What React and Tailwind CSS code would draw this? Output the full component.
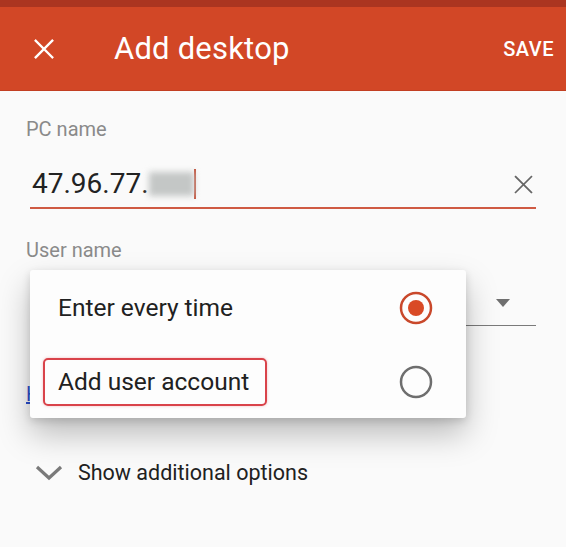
import React from 'react';

function CloseIcon({ size = 22, stroke = 'currentColor', width = 2.5 }) {
  return (
    <svg width={size} height={size} viewBox="0 0 24 24" fill="none">
      <path d="M3 3L21 21M21 3L3 21" stroke={stroke} strokeWidth={width} strokeLinecap="square" />
    </svg>
  );
}

function Radio({ checked }) {
  return (
    <svg width="34" height="34" viewBox="0 0 34 34">
      {checked ? (
        <>
          <circle cx="17" cy="17" r="15" fill="none" stroke="#c9482b" strokeWidth="2.5" />
          <circle cx="17" cy="17" r="8" fill="#d94a26" />
        </>
      ) : (
        <circle cx="17" cy="17" r="15" fill="none" stroke="#6e6e6e" strokeWidth="2.5" />
      )}
    </svg>
  );
}

export default function App() {
  return (
    <div className="relative w-[566px] h-[547px] overflow-hidden bg-[#fafafa] font-['Roboto',sans-serif]">
      {/* status strip */}
      <div className="h-[7px] bg-[#ab3520]" />

      {/* toolbar */}
      <header className="h-[84px] bg-[#d24726] flex items-center text-white border-b border-[#c23f22]">
        <div className="ml-[33px] text-white">
          <CloseIcon size={22} stroke="#ffffff" width={2.6} />
        </div>
        <h1 className="ml-[59px] text-[31px] leading-none font-normal tracking-[0.2px]">Add desktop</h1>
        <button className="ml-auto mr-[12px] text-[20px] font-medium tracking-[0.5px]">SAVE</button>
      </header>

      {/* form */}
      <div className="pl-[26px] pr-[30px]">
        <div className="mt-[26px] text-[20px] leading-[24px] text-[#8a8a8a]">PC name</div>

        <div className="mt-[24px] ml-[4px] flex items-center h-[44px] pb-[4px] border-b-[2px] border-[#cf5a43]">
          <span className="ml-[2px] text-[28px] leading-none text-[#222222]">47.96.77.</span>
          <span className="w-[45px] h-[24px] bg-[#c4c7c6] blur-[3px]" />
          <span className="w-[2px] h-[30px] bg-[#c4553f]" />
          <span className="ml-auto mr-[2px] text-[#6a6a6a]">
            <CloseIcon size={21} stroke="#666666" width={2} />
          </span>
        </div>

        <div className="mt-[29px] text-[20px] leading-[24px] text-[#8a8a8a]">User name</div>

        <div className="mt-[22px] ml-[4px] flex items-center justify-end h-[42px] border-b border-[#7a7a7a]">
          <svg width="14" height="8" viewBox="0 0 14 8" className="mr-[26px] mb-[4px]">
            <path d="M0 0H14L7 8Z" fill="#6f6f6f" />
          </svg>
        </div>

        <div className="mt-[55px] text-[20px] leading-[26px] text-[#2b4fcf] underline">How do I find my PC name?</div>

        <div className="mt-[55px] ml-[9px] flex items-center gap-[15px]">
          <svg width="28" height="16" viewBox="0 0 28 16">
            <path d="M2 2L14 13L26 2" fill="none" stroke="#7a7a7a" strokeWidth="3.2" />
          </svg>
          <span className="text-[21.5px] leading-none text-[#212121]">Show additional options</span>
        </div>
      </div>

      {/* dropdown menu */}
      <div className="absolute left-[30px] top-[270px] w-[436px] h-[148px] bg-[#fdfdfd] rounded-[3px] shadow-[0_16px_32px_rgba(0,0,0,0.25),0_3px_8px_rgba(0,0,0,0.14)]">
        <div className="h-[76px] flex items-center pl-[28px] pr-[33px]">
          <span className="text-[24.5px] text-[#212121]">Enter every time</span>
          <span className="ml-auto"><Radio checked /></span>
        </div>
        <div className="h-[72px] flex items-center pl-[13px] pr-[33px]">
          <span className="pl-[13px] pr-[16px] h-[48px] flex items-center border-2 border-[#d9434a] rounded-[5px] shadow-[0_0_3px_rgba(217,67,74,0.35)] text-[24.5px] text-[#212121]">
            Add user account
          </span>
          <span className="ml-auto"><Radio /></span>
        </div>
      </div>
    </div>
  );
}
